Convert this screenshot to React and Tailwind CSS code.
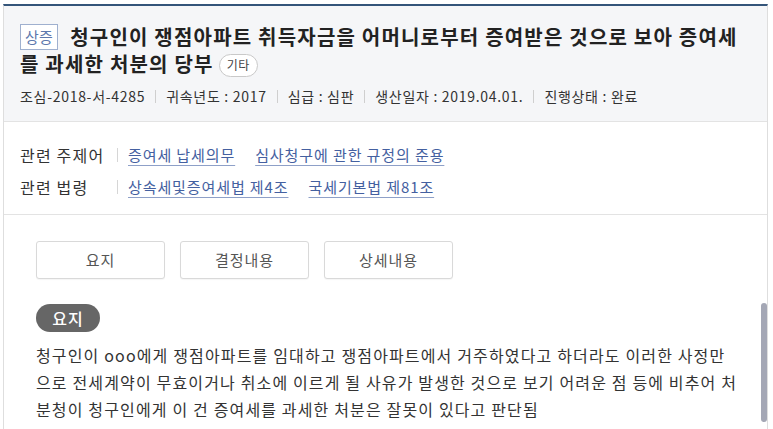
export default function App() {
  const font = { fontFamily: '"Noto Sans CJK KR", "Noto Sans", sans-serif' };
  const Sep = () => <span className="mx-[10px] inline-block h-[13px] w-px bg-[#cfcfcf] align-[-1px]" />;
  const link = 'underline decoration-[#8ea0c8] underline-offset-[4px]';
  return (
    <div className="relative h-[429px] w-[773px] overflow-hidden bg-white text-[#333]" style={font}>
      <div className="ml-[3px] mt-[4px] w-[765px] border-x border-b border-t-2 border-x-[#dedede] border-b-[#dedede] border-t-[#34557a]">
        <div className="border-b border-[#e3e3e3] bg-[#f5f6f8] px-[16px] pb-[15px] pt-[17px]">
          <h1 className="whitespace-nowrap text-[20px] font-bold leading-[27px] tracking-[1.2px] text-[#222]">
            <span className="mr-[12px] inline-flex h-[26px] items-center border border-[#9fb0cf] bg-white px-[4px] align-[2px] text-[15px] font-normal leading-none tracking-[0.3px] text-[#5d78ad]">
              상증
            </span>
            청구인이 쟁점아파트 취득자금을 어머니로부터 증여받은 것으로 보아 증여세
            <br />
            를 과세한 처분의 당부
            <span className="ml-[5px] inline-flex h-[23px] items-center rounded-full border border-[#c9c9c9] bg-white px-[7px] align-[2px] text-[12px] font-normal leading-none tracking-[0.5px] text-[#444]">
              기타
            </span>
          </h1>
          <div className="mt-[9px] flex items-center text-[14px] leading-[20px] tracking-[0.7px] text-[#333]">
            <span>조심-2018-서-4285</span>
            <Sep />
            <span>귀속년도 : 2017</span>
            <Sep />
            <span>심급 : 심판</span>
            <Sep />
            <span>생산일자 : 2019.04.01.</span>
            <Sep />
            <span>진행상태 : 완료</span>
          </div>
        </div>
        <div className="border-b border-[#e3e3e3] bg-white px-[16px] pb-[11px] pt-[17px] leading-[32px]">
          <div className="flex items-center">
            <span className="w-[97px] text-[16px] tracking-[1.2px] text-[#333]">관련 주제어</span>
            <span className="h-[14px] w-px bg-[#d6d6d6]" />
            <div className="ml-[10px] flex gap-[20px] text-[15px] tracking-[0.9px] text-[#4460a0]">
              <span className={link}>증여세 납세의무</span>
              <span className={link}>심사청구에 관한 규정의 준용</span>
            </div>
          </div>
          <div className="flex items-center">
            <span className="w-[97px] text-[16px] tracking-[1.2px] text-[#333]">관련 법령</span>
            <span className="h-[14px] w-px bg-[#d6d6d6]" />
            <div className="ml-[10px] flex gap-[20px] text-[15px] tracking-[0.9px] text-[#4460a0]">
              <span className={link}>상속세및증여세법 제4조</span>
              <span className={link}>국세기본법 제81조</span>
            </div>
          </div>
        </div>
        <div className="h-[300px] bg-white px-[32px] pt-[26px]">
          <div className="flex gap-[15px]">
            {['요지', '결정내용', '상세내용'].map((t) => (
              <div
                key={t}
                className="flex h-[38px] w-[129px] items-center justify-center rounded-[3px] border border-[#d9d9d9] bg-white text-[15px] tracking-[0.9px] text-[#555] shadow-[0_1px_1px_rgba(0,0,0,0.04)]"
              >
                {t}
              </div>
            ))}
          </div>
          <div className="mt-[25px] flex h-[28px] w-[64px] items-center justify-center rounded-full bg-[#666] text-[16px] font-medium tracking-[1px] text-white">
            요지
          </div>
          <p className="mt-[10px] whitespace-nowrap text-[16px] leading-[27px] tracking-[1.15px] text-[#333]">
            청구인이 ooo에게 쟁점아파트를 임대하고 쟁점아파트에서 거주하였다고 하더라도 이러한 사정만
            <br />
            으로 전세계약이 무효이거나 취소에 이르게 될 사유가 발생한 것으로 보기 어려운 점 등에 비추어 처
            <br />
            분청이 청구인에게 이 건 증여세를 과세한 처분은 잘못이 있다고 판단됨
          </p>
        </div>
      </div>
      <div className="absolute left-[761px] top-[303px] h-[119px] w-[6px] rounded-full bg-[#a4a7b5]" />
    </div>
  );
}
